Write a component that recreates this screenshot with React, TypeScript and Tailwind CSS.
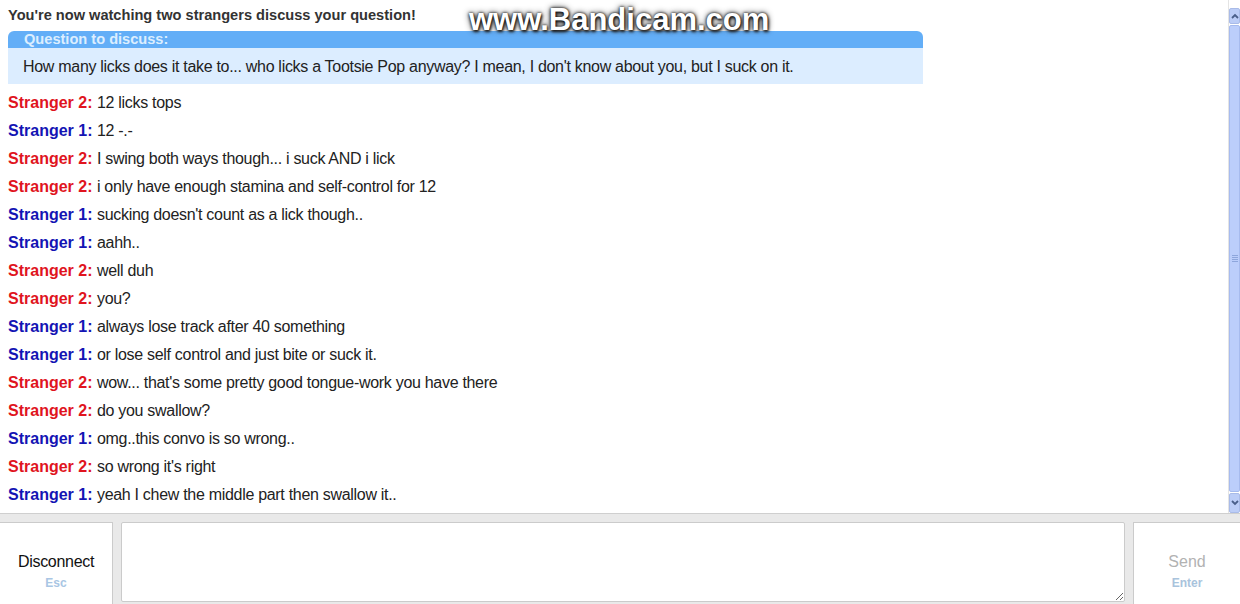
const messages: { who: 1 | 2; text: string }[] = [
  { who: 2, text: "12 licks tops" },
  { who: 1, text: "12 -.-" },
  { who: 2, text: "I swing both ways though... i suck AND i lick" },
  { who: 2, text: "i only have enough stamina and self-control for 12" },
  { who: 1, text: "sucking doesn't count as a lick though.." },
  { who: 1, text: "aahh.." },
  { who: 2, text: "well duh" },
  { who: 2, text: "you?" },
  { who: 1, text: "always lose track after 40 something" },
  { who: 1, text: "or lose self control and just bite or suck it." },
  { who: 2, text: "wow... that's some pretty good tongue-work you have there" },
  { who: 2, text: "do you swallow?" },
  { who: 1, text: "omg..this convo is so wrong.." },
  { who: 2, text: "so wrong it's right" },
  { who: 1, text: "yeah I chew the middle part then swallow it.." },
];

const Scrollbar = () => (
  <div className="w-[12px] pt-[8px] flex flex-col border-l border-[#e4e4e4]">
    <div className="h-[16px] bg-[#bccdf7] border border-[#a9bbe8] rounded-[2px] flex items-center justify-center">
      <svg width="8" height="6" viewBox="0 0 8 6">
        <path d="M1 5 L4 2 L7 5" stroke="#4a5f8a" strokeWidth="1.8" fill="none" />
      </svg>
    </div>
    <div className="flex-1 my-[1px] bg-[#bccefb] border border-[#a7bbee] rounded-[2px] flex items-center justify-center">
      <div className="flex flex-col gap-[1px]">
        <div className="w-[6px] h-px bg-[#8ea6dc]" />
        <div className="w-[6px] h-px bg-[#8ea6dc]" />
        <div className="w-[6px] h-px bg-[#8ea6dc]" />
        <div className="w-[6px] h-px bg-[#8ea6dc]" />
      </div>
    </div>
    <div className="h-[20px] bg-[#bccdf7] border border-[#a9bbe8] rounded-[2px] flex items-center justify-center">
      <svg width="8" height="6" viewBox="0 0 8 6">
        <path d="M1 1 L4 4 L7 1" stroke="#4a5f8a" strokeWidth="1.8" fill="none" />
      </svg>
    </div>
  </div>
);

export default function App() {
  return (
    <div
      className="relative w-[1240px] h-[604px] overflow-hidden bg-white flex flex-col"
      style={{ fontFamily: '"Liberation Sans", Arial, sans-serif' }}
    >
      {/* Chat log */}
      <div className="h-[513px] shrink-0 flex">
        <div className="flex-1 pl-[8px]">
          <p className="pt-[7px] pb-[7px] leading-[17px] text-[14.6px] font-bold text-[#333]">
            You're now watching two strangers discuss your question!
          </p>
          <div className="w-[915px] rounded-t-[6px] overflow-hidden">
            <div className="h-[17px] bg-[#63aef7] pl-[16px] text-[14.6px] leading-[17px] font-bold text-[#dceeff]">
              Question to discuss:
            </div>
            <div className="h-[36px] bg-[#dcedff] pl-[15px] text-[16px] leading-[37px] tracking-[-0.3px] text-[#222]">
              How many licks does it take to... who licks a Tootsie Pop anyway? I mean, I don't know about you, but I suck on it.
            </div>
          </div>
          <div className="mt-[5px]">
            {messages.map((m, i) => (
              <p key={i} className="text-[16px] leading-[28px] text-[#222]">
                <strong className={m.who === 1 ? "text-[#1414b4]" : "text-[#e0141e]"}>
                  Stranger {m.who}:
                </strong>{" "}
                <span className="tracking-[-0.3px]">{m.text}</span>
              </p>
            ))}
          </div>
        </div>
        <Scrollbar />
      </div>

      {/* Bottom controls */}
      <div className="flex-1 min-h-0 bg-[#e9e9e9] border-t border-[#cfcfcf] pt-[8px] flex gap-[8px]">
        <div className="w-[113px] h-[98px] shrink-0 bg-white border border-[#cbcbcb] border-l-0 rounded-br-[6px] flex flex-col items-center justify-center">
          <span className="text-[16px] leading-[20px] text-[#111] tracking-[-0.3px]">Disconnect</span>
          <span className="mt-[3px] text-[12px] leading-[16px] font-bold text-[#a9c6e4]">Esc</span>
        </div>
        <textarea className="flex-1 h-[80px] bg-white border border-[#cbcbcb] rounded-[2px] outline-none" />
        <div className="w-[107px] h-[98px] shrink-0 bg-white border border-[#cbcbcb] border-r-0 rounded-bl-[6px] flex flex-col items-center justify-center">
          <span className="text-[16px] leading-[20px] text-[#b2b2b2]">Send</span>
          <span className="mt-[3px] text-[12px] leading-[16px] font-bold text-[#a9c3dc]">Enter</span>
        </div>
      </div>

      {/* Recorder watermark */}
      <div
        className="absolute left-[469px] top-[1px] text-[31px] leading-[38px] font-bold text-white"
        style={{ textShadow: "0 0 3px #000, 1px 2px 3px #222, 0 0 6px #333" }}
      >
        www.Bandicam.com
      </div>
    </div>
  );
}
